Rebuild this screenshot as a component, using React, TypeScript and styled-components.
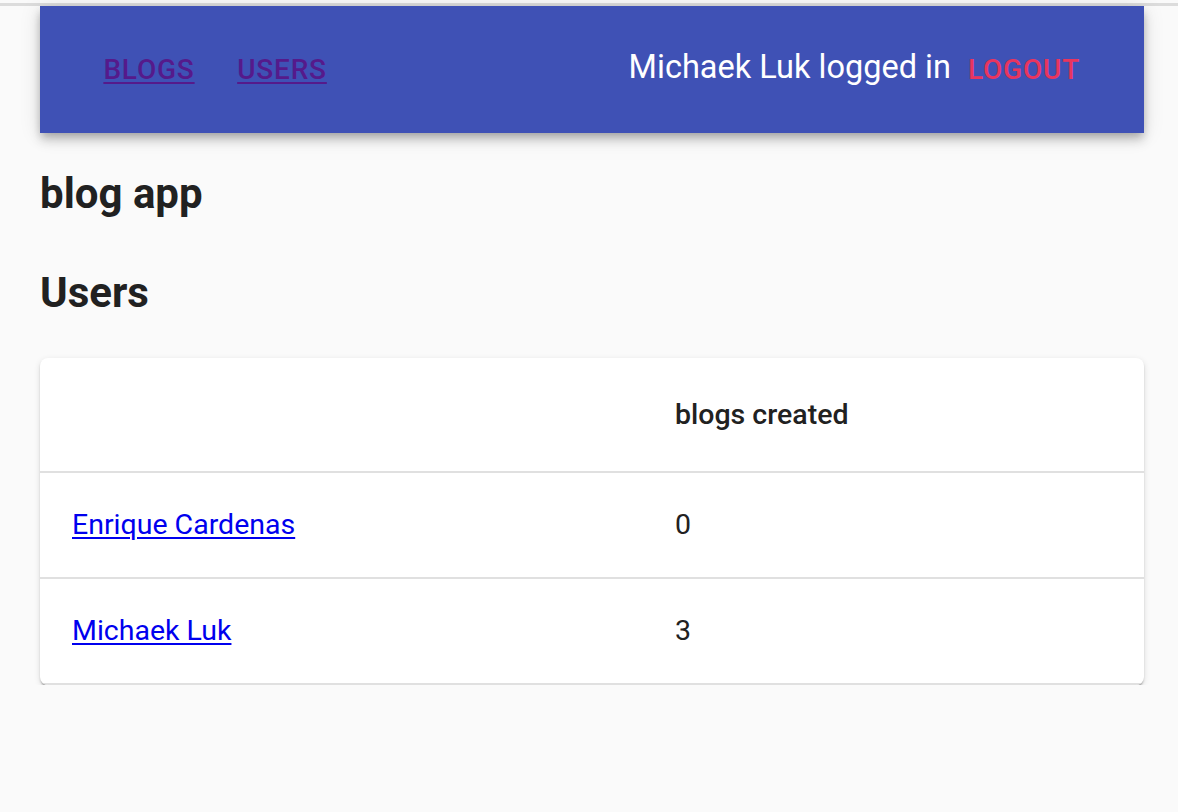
import React from "react"
import styled, {createGlobalStyle} from "styled-components";

const GlobalStyle = createGlobalStyle`
  * {
    box-sizing: border-box;
  }

  body {
    margin: 0;
    background: #fafafa;
    font-family: Roboto, "Liberation Sans", sans-serif;
    color: rgba(0, 0, 0, 0.87);
  }
`

const BrowserEdge = styled.div`
  height: 3px;
  margin-top: 3px;
  background: #dcdcdc;
`

const Page = styled.div`
  padding: 0 34px 0 40px;
`

const AppBar = styled.header`
  height: 127px;
  position: relative;
  background: #3f51b5;
  box-shadow: 0 4px 8px -2px rgba(0, 0, 0, 0.2),
  0 8px 10px 0 rgba(0, 0, 0, 0.14),
  0 2px 20px 0 rgba(0, 0, 0, 0.12);
`

const Toolbar = styled.nav`
  height: 100%;
  padding: 0 48px;
  display: flex;
  align-items: center;
`

const NavLink = styled.a<{ $shift: number }>`
  display: inline-flex;
  justify-content: center;
  min-width: 128px;
  padding: 12px 16px;
  margin-left: ${p => p.$shift}px;
  font-size: 28px;
  font-weight: 500;
  line-height: 49px;
  letter-spacing: 0.8px;
  text-transform: uppercase;
  color: #551a8b;
  text-decoration: underline;
  text-decoration-thickness: 2px;
  text-underline-offset: 3px;
`

const Spacer = styled.div`
  flex: 1;
`

const UserText = styled.span`
  font-size: 32.5px;
  color: #fff;
  margin-top: -6px;
`

const LogoutButton = styled.button`
  margin-left: 1px;
  min-width: 128px;
  padding: 12px 16px;
  border: none;
  background: none;
  font-family: inherit;
  font-size: 28px;
  font-weight: 500;
  line-height: 49px;
  letter-spacing: 0.8px;
  text-transform: uppercase;
  color: #e8355f;
  cursor: pointer;
`

const Heading = styled.h3<{ $top: number }>`
  margin: ${p => p.$top}px 0 0;
  font-size: 42px;
  line-height: 48px;
  font-weight: 700;
  color: #212121;
`

const Paper = styled.div`
  margin-top: 41px;
  background: #fff;
  border-radius: 8px;
  overflow: hidden;
  box-shadow: 0 4px 2px -2px rgba(0, 0, 0, 0.25),
  0 2px 2px 0 rgba(0, 0, 0, 0.14),
  0 2px 6px 0 rgba(0, 0, 0, 0.12);
`

const Table = styled.table`
  width: 100%;
  border-collapse: collapse;
`

const HeadCell = styled.th`
  padding: 32px;
  text-align: left;
  font-size: 28.5px;
  font-weight: 500;
  line-height: 49px;
  color: #212121;
  border-bottom: 2px solid #e0e0e0;

  &:first-child {
    width: 603px;
  }
`

const Cell = styled.td`
  padding: 32px;
  font-size: 28.5px;
  line-height: 40px;
  color: #212121;
  border-bottom: 2px solid #e0e0e0;
`

const UserLink = styled.a`
  color: #0000ee;
  text-decoration: underline;
  text-decoration-thickness: 2px;
  text-underline-offset: 3px;
`

const users = [
    {name: "Enrique Cardenas", blogs: 0},
    {name: "Michaek Luk", blogs: 3},
]

export default function App() {
    return (
        <>
            <GlobalStyle/>
            <BrowserEdge/>
            <Page>
                <AppBar>
                    <Toolbar>
                        <NavLink href="#" $shift={-3}>blogs</NavLink>
                        <NavLink href="#" $shift={5}>users</NavLink>
                        <Spacer/>
                        <UserText>Michaek Luk logged in</UserText>
                        <LogoutButton>logout</LogoutButton>
                    </Toolbar>
                </AppBar>
                <Heading $top={37}>blog app</Heading>
                <Heading $top={51}>Users</Heading>
                <Paper>
                    <Table>
                        <thead>
                        <tr>
                            <HeadCell/>
                            <HeadCell>blogs created</HeadCell>
                        </tr>
                        </thead>
                        <tbody>
                        {users.map(u => (
                            <tr key={u.name}>
                                <Cell><UserLink href="#">{u.name}</UserLink></Cell>
                                <Cell>{u.blogs}</Cell>
                            </tr>
                        ))}
                        </tbody>
                    </Table>
                </Paper>
            </Page>
        </>
    )
}
